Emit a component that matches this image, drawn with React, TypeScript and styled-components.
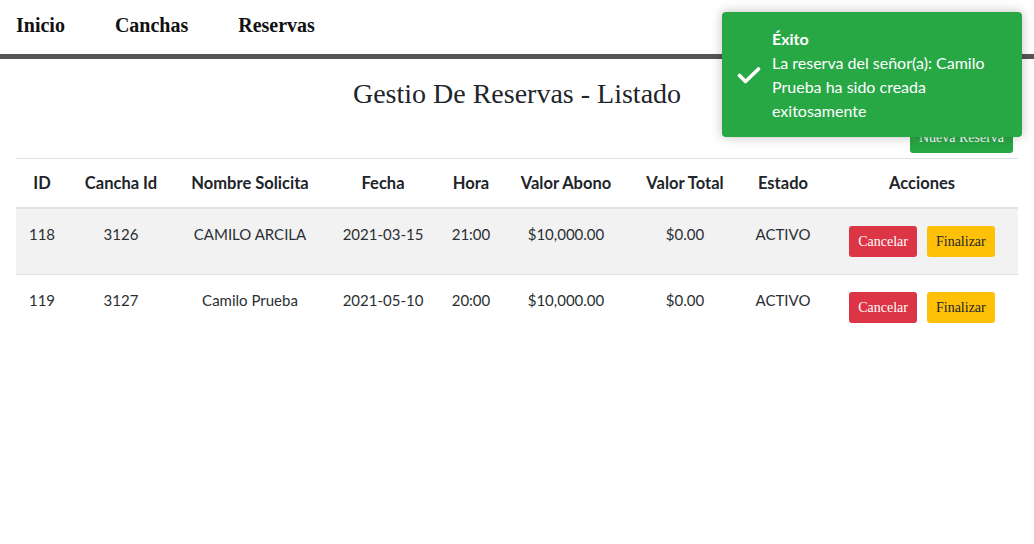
import React from "react";
import styled, { createGlobalStyle } from "styled-components";

const Global = createGlobalStyle`
  html, body { margin: 0; padding: 0; background: #fff; }
  body { font-family: "Liberation Serif", serif; color: #212529; }
`;

const Page = styled.div`
  position: relative;
  width: 1034px;
  min-height: 544px;
`;

const Nav = styled.nav`
  display: flex;
  align-items: center;
  gap: 50px;
  height: 54px;
  padding: 0 16px;
  border-bottom: 5px solid #555;
`;

const NavLink = styled.a`
  font-family: "Liberation Serif", serif;
  font-weight: bold;
  font-size: 20px;
  color: #111;
  text-decoration: none;
  margin-top: -4px;
`;

const Content = styled.main`
  padding: 0 16px;
`;

const Title = styled.h1`
  margin: 18px 0 0;
  text-align: center;
  font-family: "Liberation Serif", serif;
  font-weight: normal;
  font-size: 28px;
  line-height: 34px;
  color: #212529;
`;

const Toolbar = styled.div`
  display: flex;
  justify-content: flex-end;
  padding-right: 5px;
  margin-top: 11px;
`;

const NewButton = styled.button`
  font-family: "Liberation Serif", serif;
  font-size: 14px;
  background: #28a745;
  color: #fff;
  border: none;
  border-radius: 3px;
  width: 103px;
  height: 31px;
  padding: 0;
`;

const Table = styled.table`
  margin-top: 5px;
  width: 1002px;
  border-collapse: collapse;
  font-family: "Lato", sans-serif;
  font-size: 16px;
  table-layout: fixed;
`;

const Th = styled.th`
  border-top: 1px solid #dee2e6;
  border-bottom: 2px solid #dee2e6;
  height: 48px;
  padding: 0;
  font-weight: bold;
  font-size: 16.5px;
  color: #212529;
  text-align: center;
  vertical-align: middle;
`;

const Row = styled.tr<{ $striped?: boolean }>`
  background: ${(p) => (p.$striped ? "#f2f2f2" : "#fff")};
  border-bottom: ${(p) => (p.$striped ? "1px solid #dee2e6" : "none")};
`;

const Td = styled.td`
  height: 50px;
  padding: 15px 0 0;
  vertical-align: top;
  text-align: center;
  color: #2b2f33;
  font-size: 15px;
  line-height: 20px;
`;

const Actions = styled.div`
  display: flex;
  justify-content: center;
  gap: 10px;
  margin-top: 2px;
`;

const ActionButton = styled.button<{ $variant: "danger" | "warning" }>`
  font-family: "Liberation Serif", serif;
  font-size: 14px;
  height: 31px;
  padding: 0 9px;
  border: none;
  border-radius: 3px;
  background: ${(p) => (p.$variant === "danger" ? "#dc3545" : "#ffc107")};
  color: ${(p) => (p.$variant === "danger" ? "#fff" : "#212529")};
`;

const Toast = styled.div`
  position: absolute;
  top: 12px;
  left: 722px;
  width: 300px;
  height: 125px;
  box-sizing: border-box;
  background: #28a745;
  border-radius: 4px;
  display: flex;
  align-items: center;
  padding: 0 12px 0 15px;
  gap: 11px;
  color: #fff;
  font-family: "Lato", sans-serif;
  font-size: 16px;
  line-height: 24px;
  box-shadow: 0 0 12px rgba(0, 0, 0, 0.25);

  svg {
    flex-shrink: 0;
  }
`;

const ToastBody = styled.div`
  display: flex;
  flex-direction: column;
`;

const ToastTitle = styled.strong`
  font-weight: bold;
`;

const cols = [52, 106, 152, 114, 62, 128, 110, 86, 192];
const headers = [
  "ID",
  "Cancha Id",
  "Nombre Solicita",
  "Fecha",
  "Hora",
  "Valor Abono",
  "Valor Total",
  "Estado",
  "Acciones",
];

const rows = [
  ["118", "3126", "CAMILO ARCILA", "2021-03-15", "21:00", "$10,000.00", "$0.00", "ACTIVO"],
  ["119", "3127", "Camilo Prueba", "2021-05-10", "20:00", "$10,000.00", "$0.00", "ACTIVO"],
];

export default function App() {
  return (
    <Page>
      <Global />
      <Nav>
        <NavLink href="#">Inicio</NavLink>
        <NavLink href="#">Canchas</NavLink>
        <NavLink href="#">Reservas</NavLink>
      </Nav>
      <Content>
        <Title>Gestio De Reservas - Listado</Title>
        <Toolbar>
          <NewButton>Nueva Reserva</NewButton>
        </Toolbar>
        <Table>
          <colgroup>
            {cols.map((w, i) => (
              <col key={i} style={{ width: w }} />
            ))}
          </colgroup>
          <thead>
            <tr>
              {headers.map((h) => (
                <Th key={h}>{h}</Th>
              ))}
            </tr>
          </thead>
          <tbody>
            {rows.map((r, i) => (
              <Row key={r[0]} $striped={i === 0}>
                {r.map((c, j) => (
                  <Td key={j}>{c}</Td>
                ))}
                <Td>
                  <Actions>
                    <ActionButton $variant="danger">Cancelar</ActionButton>
                    <ActionButton $variant="warning">Finalizar</ActionButton>
                  </Actions>
                </Td>
              </Row>
            ))}
          </tbody>
        </Table>
      </Content>
      <Toast>
        <svg width="24" height="24" viewBox="0 0 24 24" fill="none">
          <path d="M2.5 12.5l6 6L21.5 6" stroke="#fff" strokeWidth="3.6" strokeLinecap="round" strokeLinejoin="round" />
        </svg>
        <ToastBody>
          <ToastTitle>Éxito</ToastTitle>
          <span>La reserva del señor(a): Camilo Prueba ha sido creada exitosamente</span>
        </ToastBody>
      </Toast>
    </Page>
  );
}
